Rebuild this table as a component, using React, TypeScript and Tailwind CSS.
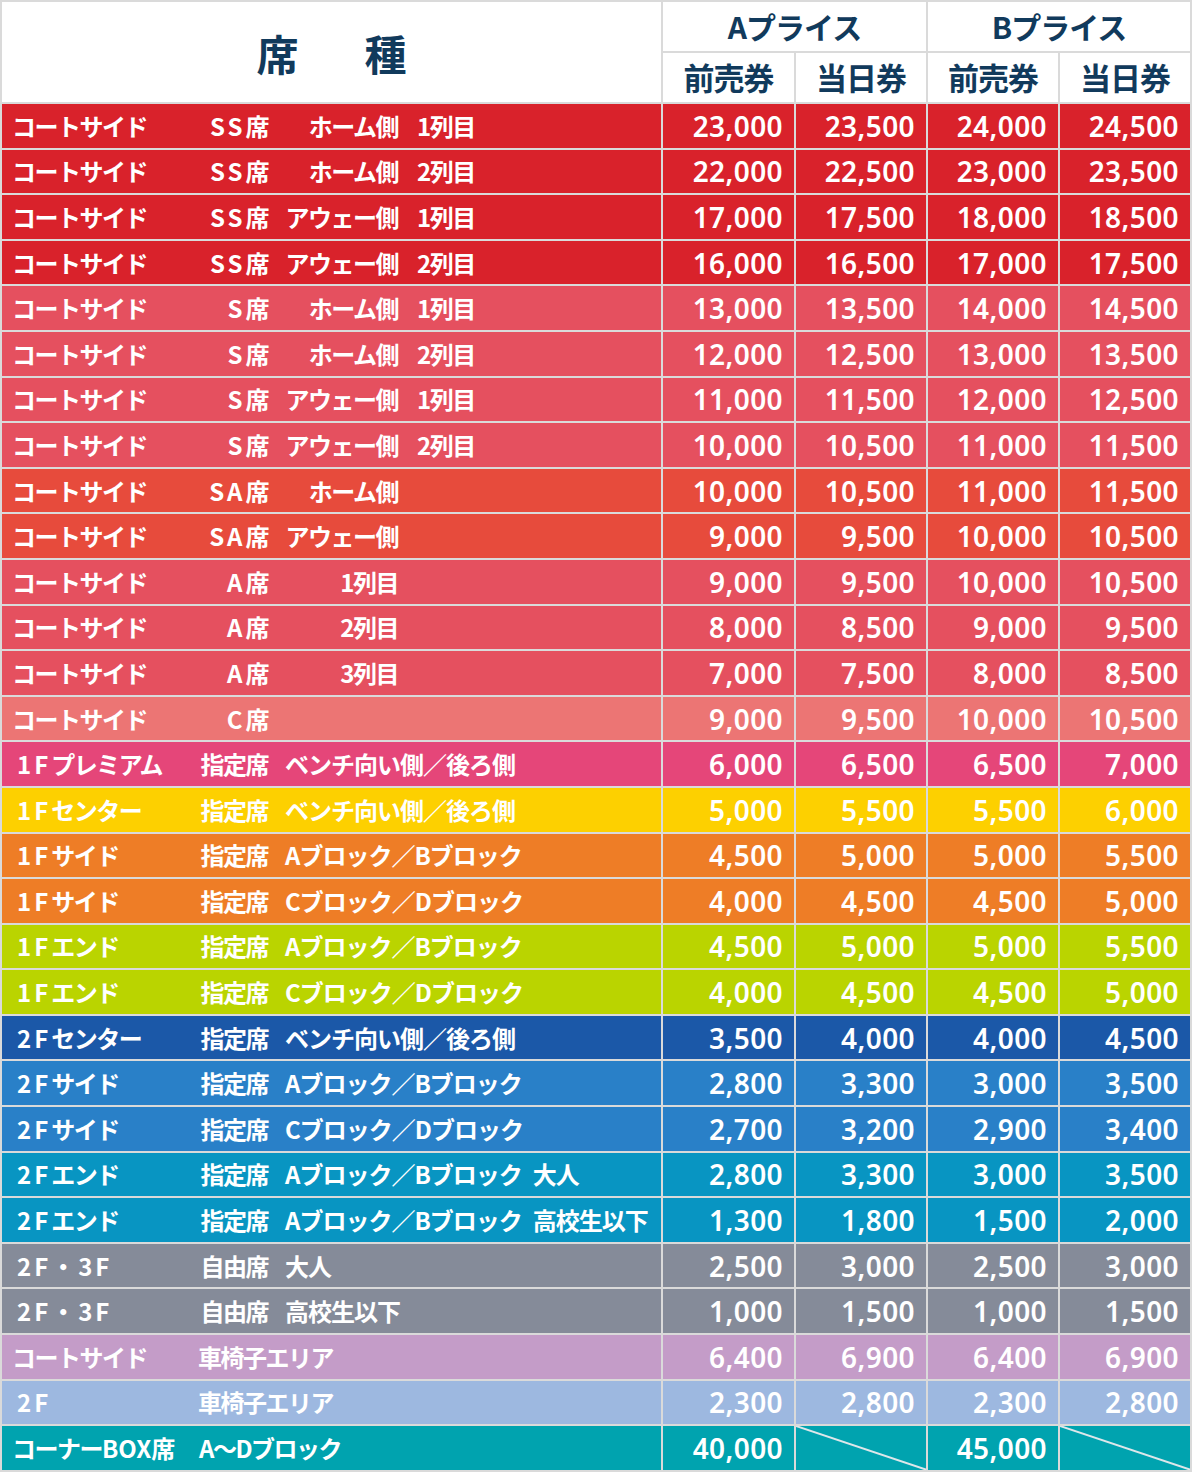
import React from 'react'

type Row = {
  cat: string
  seat?: string
  sec?: string
  col?: string
  desc?: string
  prices: (string | null)[]
  bg: string
}

const SS = 'bg-[#d9222b]'
const S = 'bg-[#e5505f]'
const SA = 'bg-[#e74b3c]'
const C = 'bg-[#ec7574]'

const rows: Row[] = [
  { cat: 'コートサイド', seat: 'SS席', sec: 'ホーム側', col: '1列目', prices: ['23,000', '23,500', '24,000', '24,500'], bg: SS },
  { cat: 'コートサイド', seat: 'SS席', sec: 'ホーム側', col: '2列目', prices: ['22,000', '22,500', '23,000', '23,500'], bg: SS },
  { cat: 'コートサイド', seat: 'SS席', sec: 'アウェー側', col: '1列目', prices: ['17,000', '17,500', '18,000', '18,500'], bg: SS },
  { cat: 'コートサイド', seat: 'SS席', sec: 'アウェー側', col: '2列目', prices: ['16,000', '16,500', '17,000', '17,500'], bg: SS },
  { cat: 'コートサイド', seat: 'S席', sec: 'ホーム側', col: '1列目', prices: ['13,000', '13,500', '14,000', '14,500'], bg: S },
  { cat: 'コートサイド', seat: 'S席', sec: 'ホーム側', col: '2列目', prices: ['12,000', '12,500', '13,000', '13,500'], bg: S },
  { cat: 'コートサイド', seat: 'S席', sec: 'アウェー側', col: '1列目', prices: ['11,000', '11,500', '12,000', '12,500'], bg: S },
  { cat: 'コートサイド', seat: 'S席', sec: 'アウェー側', col: '2列目', prices: ['10,000', '10,500', '11,000', '11,500'], bg: S },
  { cat: 'コートサイド', seat: 'SA席', sec: 'ホーム側', prices: ['10,000', '10,500', '11,000', '11,500'], bg: SA },
  { cat: 'コートサイド', seat: 'SA席', sec: 'アウェー側', prices: ['9,000', '9,500', '10,000', '10,500'], bg: SA },
  { cat: 'コートサイド', seat: 'A席', sec: '1列目', prices: ['9,000', '9,500', '10,000', '10,500'], bg: S },
  { cat: 'コートサイド', seat: 'A席', sec: '2列目', prices: ['8,000', '8,500', '9,000', '9,500'], bg: S },
  { cat: 'コートサイド', seat: 'A席', sec: '3列目', prices: ['7,000', '7,500', '8,000', '8,500'], bg: S },
  { cat: 'コートサイド', seat: 'C席', prices: ['9,000', '9,500', '10,000', '10,500'], bg: C },
  { cat: '1Fプレミアム', seat: '指定席', desc: 'ベンチ向い側／後ろ側', prices: ['6,000', '6,500', '6,500', '7,000'], bg: 'bg-[#e54679]' },
  { cat: '1Fセンター', seat: '指定席', desc: 'ベンチ向い側／後ろ側', prices: ['5,000', '5,500', '5,500', '6,000'], bg: 'bg-[#fdd000]' },
  { cat: '1Fサイド', seat: '指定席', desc: 'Aブロック／Bブロック', prices: ['4,500', '5,000', '5,000', '5,500'], bg: 'bg-[#ee7d26]' },
  { cat: '1Fサイド', seat: '指定席', desc: 'Cブロック／Dブロック', prices: ['4,000', '4,500', '4,500', '5,000'], bg: 'bg-[#ee7d26]' },
  { cat: '1Fエンド', seat: '指定席', desc: 'Aブロック／Bブロック', prices: ['4,500', '5,000', '5,000', '5,500'], bg: 'bg-[#bad400]' },
  { cat: '1Fエンド', seat: '指定席', desc: 'Cブロック／Dブロック', prices: ['4,000', '4,500', '4,500', '5,000'], bg: 'bg-[#bad400]' },
  { cat: '2Fセンター', seat: '指定席', desc: 'ベンチ向い側／後ろ側', prices: ['3,500', '4,000', '4,000', '4,500'], bg: 'bg-[#1b58a8]' },
  { cat: '2Fサイド', seat: '指定席', desc: 'Aブロック／Bブロック', prices: ['2,800', '3,300', '3,000', '3,500'], bg: 'bg-[#2980c8]' },
  { cat: '2Fサイド', seat: '指定席', desc: 'Cブロック／Dブロック', prices: ['2,700', '3,200', '2,900', '3,400'], bg: 'bg-[#2980c8]' },
  { cat: '2Fエンド', seat: '指定席', desc: 'Aブロック／Bブロック\u2002大人', prices: ['2,800', '3,300', '3,000', '3,500'], bg: 'bg-[#0895c2]' },
  { cat: '2Fエンド', seat: '指定席', desc: 'Aブロック／Bブロック\u2002高校生以下', prices: ['1,300', '1,800', '1,500', '2,000'], bg: 'bg-[#0895c2]' },
  { cat: '2F・3F', seat: '自由席', desc: '大人', prices: ['2,500', '3,000', '2,500', '3,000'], bg: 'bg-[#858b99]' },
  { cat: '2F・3F', seat: '自由席', desc: '高校生以下', prices: ['1,000', '1,500', '1,000', '1,500'], bg: 'bg-[#858b99]' },
  { cat: 'コートサイド', seat: '車椅子エリア', prices: ['6,400', '6,900', '6,400', '6,900'], bg: 'bg-[#c49cc8]' },
  { cat: '2F', seat: '車椅子エリア', prices: ['2,300', '2,800', '2,300', '2,800'], bg: 'bg-[#9db8e0]' },
  { cat: 'コーナーBOX席', seat: 'A〜Dブロック', prices: ['40,000', null, '45,000', null], bg: 'bg-[#00a3af]' },
]

function Spaced({ text }: { text: string }) {
  // leading latin letters / digits are letter-spaced in the original artwork
  const m = text.match(/^([0-9A-Z・]+)(.*)$/)
  if (!m) return <>{text}</>
  return (
    <>
      <span className="tracking-[3px]">{m[1]}</span>
      {m[2]}
    </>
  )
}

function Label({ r }: { r: Row }) {
  const isBox = r.cat.startsWith('コーナー')
  return (
    <div className={`${r.bg} flex items-center pl-[10px] text-[24px] font-bold tracking-[-1.5px] text-white whitespace-nowrap`}>
      <span className={/^\d/.test(r.cat) ? 'w-[186px] pl-[5px]' : 'w-[186px]'}>
        {isBox ? (
          <>
            コーナー<span className="tracking-[0px]">BOX</span>席
          </>
        ) : (
          <Spaced text={r.cat} />
        )}
      </span>
      <span className={isBox ? 'min-w-[70px] pl-[1px]' : 'min-w-[70px] text-right'}>
        {isBox ? r.seat : <Spaced text={r.seat ?? ''} />}
      </span>
      {r.sec && <span className="ml-[17px] w-[113px] text-right">{r.sec}</span>}
      {r.col && <span className="ml-[19px]">{r.col}</span>}
      {r.desc && <span className="ml-[17px] tracking-[-1px]">{r.desc}</span>}
    </div>
  )
}

function Price({ v, bg }: { v: string | null; bg: string }) {
  if (v === null) {
    return (
      <div className={`${bg} relative`}>
        <svg className="absolute inset-0 h-full w-full" viewBox="0 0 100 100" preserveAspectRatio="none">
          <line x1="0" y1="0" x2="100" y2="100" stroke="#dde7ea" strokeWidth="2" vectorEffect="non-scaling-stroke" />
        </svg>
      </div>
    )
  }
  return (
    <div className={`${bg} flex items-center justify-end pr-[11px] font-['Noto_Sans',sans-serif] text-[28px] font-semibold tracking-[0.4px] text-white`}>
      {v}
    </div>
  )
}

export default function App() {
  const head = "bg-white flex items-center justify-center font-bold text-[#113a5c]"
  return (
    <div className="w-[1192px] h-[1472px] bg-white font-['Noto_Sans_CJK_JP',sans-serif]">
      <div className="grid grid-cols-[659px_131px_130px_130px_130px] grid-rows-[49px_49px_repeat(30,43.6px)] gap-[2px] p-[2px] bg-[#dadada]">
        <div className={`${head} row-span-2 gap-[66px] text-[42px]`}>
          <span>席</span>
          <span>種</span>
        </div>
        <div className={`${head} col-span-2 text-[30px] tracking-[-1px]`}>Aプライス</div>
        <div className={`${head} col-span-2 text-[30px] tracking-[-1px]`}>Bプライス</div>
        <div className={`${head} text-[31px] tracking-[-1px]`}>前売券</div>
        <div className={`${head} text-[31px] tracking-[-1px]`}>当日券</div>
        <div className={`${head} text-[31px] tracking-[-1px]`}>前売券</div>
        <div className={`${head} text-[31px] tracking-[-1px]`}>当日券</div>

        {rows.map((r, i) => (
          <React.Fragment key={i}>
            <Label r={r} />
            {r.prices.map((p, j) => (
              <Price key={j} v={p} bg={r.bg} />
            ))}
          </React.Fragment>
        ))}
      </div>
    </div>
  )
}
